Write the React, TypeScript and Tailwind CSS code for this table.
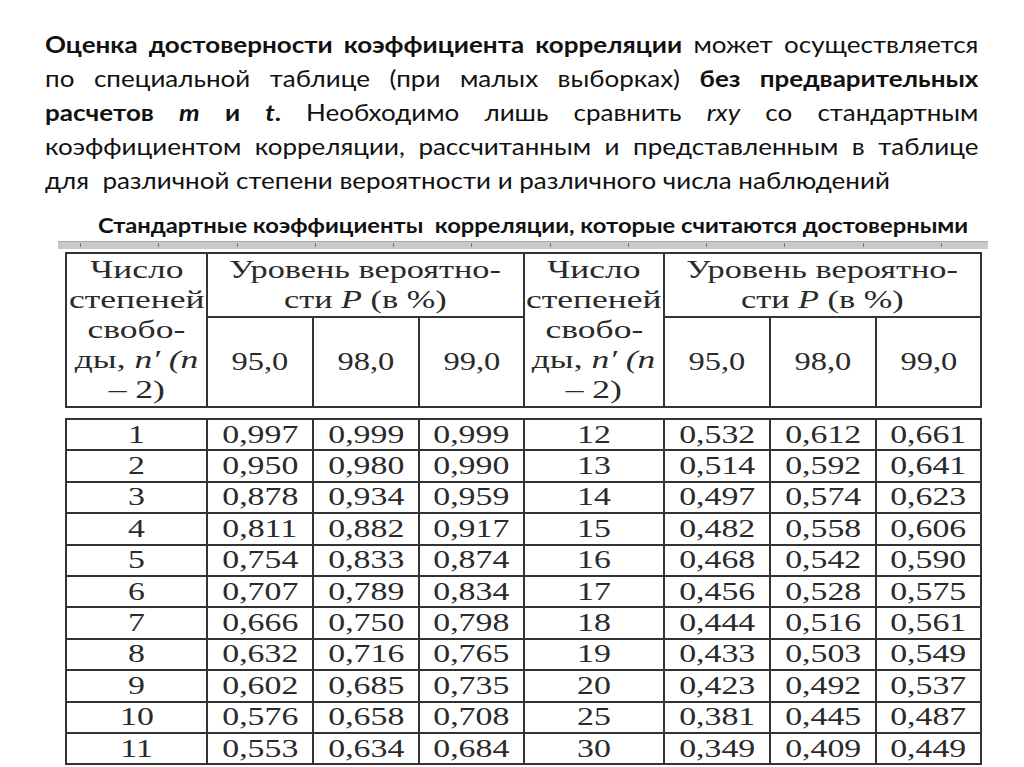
import React from "react"

const left: [string, string, string, string][] = [
  ["1", "0,997", "0,999", "0,999"],
  ["2", "0,950", "0,980", "0,990"],
  ["3", "0,878", "0,934", "0,959"],
  ["4", "0,811", "0,882", "0,917"],
  ["5", "0,754", "0,833", "0,874"],
  ["6", "0,707", "0,789", "0,834"],
  ["7", "0,666", "0,750", "0,798"],
  ["8", "0,632", "0,716", "0,765"],
  ["9", "0,602", "0,685", "0,735"],
  ["10", "0,576", "0,658", "0,708"],
  ["11", "0,553", "0,634", "0,684"],
]

const right: [string, string, string, string][] = [
  ["12", "0,532", "0,612", "0,661"],
  ["13", "0,514", "0,592", "0,641"],
  ["14", "0,497", "0,574", "0,623"],
  ["15", "0,482", "0,558", "0,606"],
  ["16", "0,468", "0,542", "0,590"],
  ["17", "0,456", "0,528", "0,575"],
  ["18", "0,444", "0,516", "0,561"],
  ["19", "0,433", "0,503", "0,549"],
  ["20", "0,423", "0,492", "0,537"],
  ["25", "0,381", "0,445", "0,487"],
  ["30", "0,349", "0,409", "0,449"],
]

const widths = ["w-[141px]", "w-[106px]", "w-[106px]", "w-[105px]", "w-[140px]", "w-[106px]", "w-[106px]", "w-[105px]"]

// stretched serif text, the table in the slide is a widened scan
function S({ children }: { children: React.ReactNode }) {
  return <span className="inline-block scale-x-[1.3] whitespace-nowrap">{children}</span>
}

function H({ children }: { children: React.ReactNode }) {
  return <span className="inline-block scale-x-[1.42] whitespace-nowrap">{children}</span>
}

function Line({ children, last }: { children: React.ReactNode; last?: boolean }) {
  return (
    <div className={last ? "h-[34px] whitespace-pre" : "h-[34px] text-justify [text-align-last:justify]"}>
      {children}
    </div>
  )
}

function DegreesHead() {
  return (
    <td rowSpan={2} className="border-2 border-[#333] align-middle text-center leading-[30px]">
      <H>Число</H>
      <br />
      <H>степеней</H>
      <br />
      <H>свобо-</H>
      <br />
      <H>
        ды, <i>n′ (n</i>
      </H>
      <br />
      <H>– 2)</H>
    </td>
  )
}

function LevelHead() {
  return (
    <td colSpan={3} className="border-2 border-[#333] text-center leading-[30px]">
      <span className="inline-block scale-x-[1.37] whitespace-nowrap">Уровень вероятно-</span>
      <br />
      <span className="inline-block scale-x-[1.37] whitespace-nowrap">
        сти <i>P</i> (в %)
      </span>
    </td>
  )
}

export default function App() {
  return (
    <div className="w-[1024px] h-[767px] bg-white overflow-hidden text-[#111]">
      <div className="ml-[45px] w-[826px] origin-left scale-x-[1.13] pt-[27px] font-['Lato',sans-serif] text-[23px] leading-[34px]">
        <Line>
          <b>Оценка достоверности коэффициента корреляции</b> может осуществляется
        </Line>
        <Line>
          по специальной таблице (при малых выборках) <b>без предварительных</b>
        </Line>
        <Line>
          <b>расчетов</b> <b><i>m</i></b> <b>и</b> <b><i>t</i>.</b> Необходимо лишь сравнить <i>rxy</i> со стандартным
        </Line>
        <Line>коэффициентом корреляции, рассчитанным и представленным в таблице</Line>
        <Line last>для  различной степени вероятности и различного числа наблюдений</Line>
      </div>

      <div className="mt-[15px] h-[25px] leading-[25px] ml-[98px] origin-left scale-x-[1.13] font-['Lato',sans-serif] font-bold text-[21px] whitespace-pre">
        Стандартные коэффициенты  корреляции, которые считаются достоверными
      </div>

      <div className="ml-[58px] mt-[4px] w-[930px] h-[8px] bg-[#c9c9c9] border-t border-[#a9a9a9] flex justify-between pl-[22px] pr-[46px]">
        {Array.from({ length: 12 }).map((_, i) => (
          <div key={i} className="w-px h-[4px] mt-[1px] bg-[#777]" />
        ))}
      </div>

      <div className="ml-[65px] mt-[3px] font-['Liberation_Serif',serif] text-[#2a2a2a]">
        <table className="border-collapse table-fixed w-[915px] text-[25px]">
          <colgroup>
            {widths.map((w, i) => (
              <col key={i} className={w} />
            ))}
          </colgroup>
          <tbody>
            <tr className="h-[64px]">
              <DegreesHead />
              <LevelHead />
              <DegreesHead />
              <LevelHead />
            </tr>
            <tr className="h-[90px]">
              {["95,0", "98,0", "99,0"].map((v) => (
                <td key={"a" + v} className="border-2 border-[#333] text-center">
                  <S>{v}</S>
                </td>
              ))}
              {["95,0", "98,0", "99,0"].map((v) => (
                <td key={"b" + v} className="border-2 border-[#333] text-center">
                  <S>{v}</S>
                </td>
              ))}
            </tr>
          </tbody>
        </table>

        <table className="mt-[10px] border-collapse table-fixed w-[915px] text-[26px] leading-[28px]">
          <colgroup>
            {widths.map((w, i) => (
              <col key={i} className={w} />
            ))}
          </colgroup>
          <tbody>
            {left.map((row, r) => (
              <tr key={r} className="h-[31.4px]">
                {[...row, ...right[r]].map((v, c) => (
                  <td key={c} className="border-2 border-[#333] text-center p-0">
                    <S>{v}</S>
                  </td>
                ))}
              </tr>
            ))}
          </tbody>
        </table>
      </div>
    </div>
  )
}
